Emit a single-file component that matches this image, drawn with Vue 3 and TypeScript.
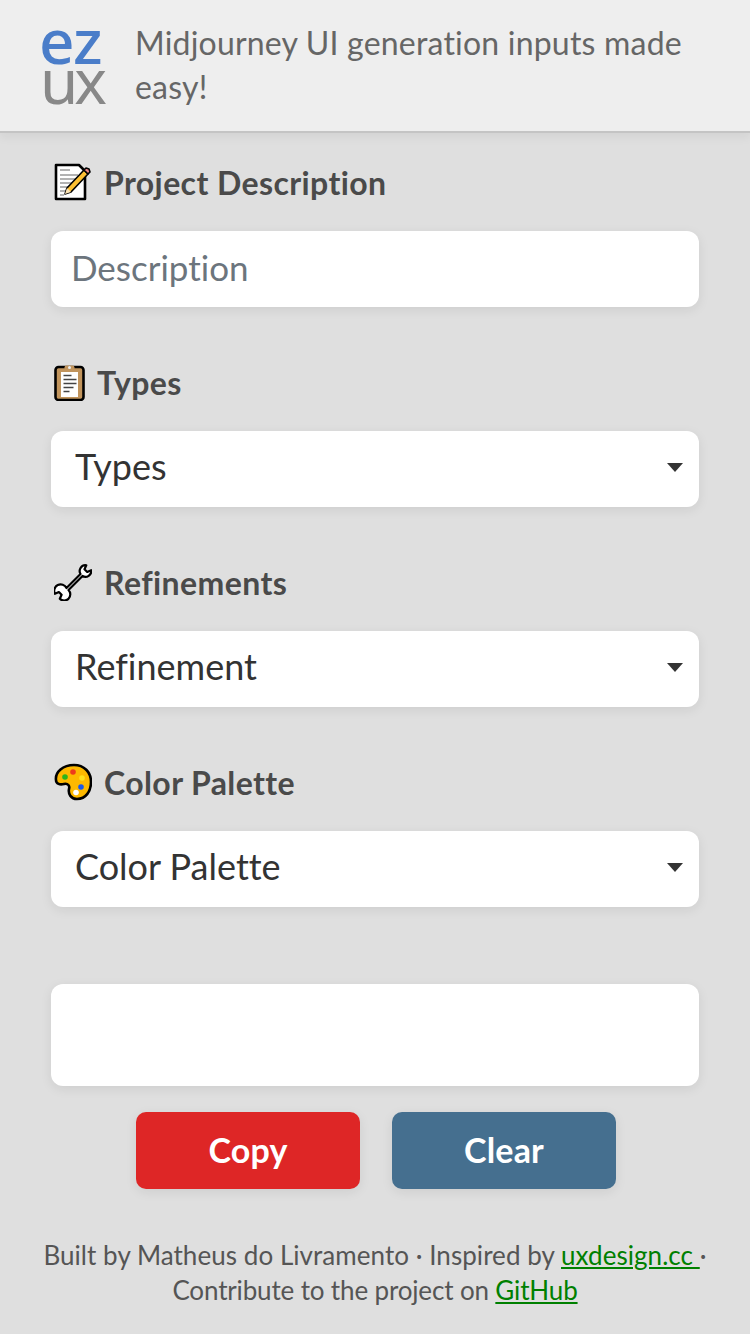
<template>
  <div class="page">
    <header class="topbar">
      <div class="logo">
        <span class="logo-ez">ez</span>
        <span class="logo-ux">ux</span>
      </div>
      <p class="tagline">Midjourney UI generation inputs made easy!</p>
    </header>

    <main class="form">
      <section class="field">
        <h2 class="label">
          <svg class="emoji" viewBox="0 0 38 38">
            <path d="M2 2h23l6 6v28H2z" fill="#fff" stroke="#000" stroke-width="2.6" stroke-linejoin="round" />
            <path d="M6 7h10M6 12h18M6 16h18M6 20h15M6 24h11M6 28h8M6 32h4" stroke="#999" stroke-width="1.5" />
            <path d="M11 31l2-6L30 7l4 4-17 18z" fill="#fdc033" stroke="#000" stroke-width="1.6" stroke-linejoin="round" />
            <path d="M30 7l2-2 3 1 1 3-2 2z" fill="#e88" stroke="#000" stroke-width="1.6" stroke-linejoin="round" />
            <path d="M11 31l2-6 4 4z" fill="#fbe3b5" />
          </svg>
          Project Description
        </h2>
        <input class="control text-input" type="text" placeholder="Description" />
      </section>

      <section class="field">
        <h2 class="label">
          <svg class="emoji emoji-narrow" viewBox="0 0 31 38">
            <rect x="1.5" y="4" width="28" height="33" rx="3" fill="#c1945c" stroke="#000" stroke-width="2.6" />
            <path d="M7 9h17v25H7z" fill="#fff" />
            <path d="M9.500 12.500h8M9.500 16.500h13M9.500 20.500h13M9.500 24.500h10M9.500 28.500h6" stroke="#444" stroke-width="1.500" />
            <rect x="10.500" y="2.500" width="10" height="6" rx="2" fill="#c1945c" />
            <circle cx="15.500" cy="4.500" r="1.500" fill="#eee" />
          </svg>
          Types
        </h2>
        <div class="select-wrap">
          <select class="control select select-types">
            <option>Types</option>
          </select>
          <span class="caret"></span>
        </div>
      </section>

      <section class="field">
        <h2 class="label">
          <svg class="emoji" viewBox="0 0 38 38">
            <path d="M25.500 11.500A5.800 5.800 0 0 1 31.300 2.800L29.500 6.800 32.200 9.500 36.200 7.700A5.800 5.800 0 0 1 27.500 13.500L13.500 27.500A5.800 5.800 0 0 1 4.800 36.200L6.600 32.200 3.900 29.500-.1 31.300A5.800 5.800 0 0 1 11.500 25.500Z" transform="translate(1 -.5)" fill="#fff" stroke="#000" stroke-width="2.200" stroke-linejoin="round" />
          </svg>
          Refinements
        </h2>
        <div class="select-wrap">
          <select class="control select">
            <option>Refinement</option>
          </select>
          <span class="caret"></span>
        </div>
      </section>

      <section class="field">
        <h2 class="label">
          <svg class="emoji" viewBox="0 0 38 38">
            <path d="M20 2C9 2 1 9 2 17c0 4 4 5 8 4 4-1 6 2 5 5-1 5 2 10 8 10 9 0 14-8 14-17C37 9 30 2 20 2z" fill="#fdb900" stroke="#000" stroke-width="2.6" stroke-linejoin="round" />
            <circle cx="11" cy="14" r="2.800" fill="#2db51b" />
            <circle cx="19" cy="9" r="2.800" fill="#ee3a1c" />
            <circle cx="28" cy="15" r="2.800" fill="#ffe01a" />
            <circle cx="27" cy="24" r="2.800" fill="#1a57e8" />
            <circle cx="22" cy="29.500" r="2.800" fill="#fff" />
          </svg>
          Color Palette
        </h2>
        <div class="select-wrap">
          <select class="control select">
            <option>Color Palette</option>
          </select>
          <span class="caret"></span>
        </div>
      </section>

      <div class="control output"></div>

      <div class="actions">
        <button class="btn btn-copy" type="button">Copy</button>
        <button class="btn btn-clear" type="button">Clear</button>
      </div>
    </main>

    <footer class="credits">
      <span class="line-one">Built by Matheus do Livramento · Inspired by <a href="#">uxdesign.cc </a>·</span><br />
      <span class="line-two">Contribute to the project on <a href="#">GitHub</a></span>
    </footer>
  </div>
</template>

<script setup lang="ts">
</script>

<style>
body {
  background: #dfdfdf;
}
</style>

<style scoped>
.page {
  font-family: Lato, "Noto Sans", sans-serif;
  font-variant-ligatures: none;
  color: #4a4a4a;
  background: #dfdfdf;
  min-height: 1334px;
}

.topbar {
  display: flex;
  align-items: center;
  gap: 30px;
  height: 131px;
  padding: 0 60px 0 42px;
  box-sizing: content-box;
  background: #eeeeee;
  border-bottom: 2px solid #c4c4c4;
  box-shadow: 0 4px 10px rgba(0, 0, 0, 0.06);
}

.logo {
  display: flex;
  flex: none;
  flex-direction: column;
  width: 63px;
  margin-top: -10px;
  font-family: "Noto Sans", sans-serif;
  font-size: 62px;
  line-height: 41px;
}

.logo-ez {
  color: #4a7dc9;
  font-weight: 500;
  letter-spacing: -1px;
  margin-left: -3px;
}

.logo-ux {
  color: #888888;
  letter-spacing: -4px;
  margin-left: -2px;
  margin-top: -1px;
}

.tagline {
  margin: -2px 0 0;
  font-size: 32px;
  line-height: 44px;
  letter-spacing: 0.2px;
  color: #666666;
}

.form {
  display: flex;
  flex-direction: column;
  padding: 0 51px;
}

.field {
  display: flex;
  flex-direction: column;
  margin-bottom: 49px;
}

.field:first-child .label {
  margin-top: 30px;
}

.label {
  display: flex;
  align-items: center;
  gap: 12px;
  height: 38px;
  margin: 7px 0 30px 3px;
  font-size: 32px;
  font-weight: 700;
  letter-spacing: 0.4px;
  color: #4a4a4a;
}

.emoji {
  width: 38px;
  height: 38px;
  flex: none;
}

.emoji-narrow {
  width: 31px;
}

.control {
  box-sizing: border-box;
  display: block;
  width: 100%;
  height: 76px;
  border: none;
  border-radius: 12px;
  background: #ffffff;
  box-shadow: 0 3px 12px rgba(0, 0, 0, 0.08);
  font-family: inherit;
  font-variant-ligatures: none;
  font-size: 36px;
  color: #333333;
}

.text-input {
  padding: 0 20px 5px;
  font-size: 35px;
  outline: none;
}

.text-input::placeholder {
  color: #6c757d;
  opacity: 1;
}

.select-wrap {
  position: relative;
}

.select {
  appearance: none;
  padding: 0 25px 6px 24px;
}

.caret {
  position: absolute;
  top: 32px;
  right: 16px;
  width: 0;
  height: 0;
  border-left: 8px solid transparent;
  border-right: 8px solid transparent;
  border-top: 9px solid #333333;
}

.output {
  height: 102px;
  margin-top: 28px;
}

.actions {
  display: flex;
  justify-content: center;
  gap: 32px;
  margin-top: 26px;
  padding-left: 2px;
}

.btn {
  width: 224px;
  height: 77px;
  border: none;
  border-radius: 10px;
  padding-bottom: 3px;
  font-family: inherit;
  font-size: 34px;
  font-weight: 700;
  letter-spacing: 0.2px;
  color: #ffffff;
  box-shadow: 0 3px 12px rgba(0, 0, 0, 0.08);
}

.btn-copy {
  background: #de2626;
}

.btn-clear {
  background: #456f8f;
}

.credits {
  margin-top: 49px;
  padding: 0 20px;
  font-size: 26px;
  line-height: 35px;
  text-align: center;
  color: #555555;
}

.line-one {
  letter-spacing: 0.05px;
}

.line-two {
  letter-spacing: -0.15px;
}

.credits a {
  color: #008000;
  text-decoration: underline;
}
</style>
